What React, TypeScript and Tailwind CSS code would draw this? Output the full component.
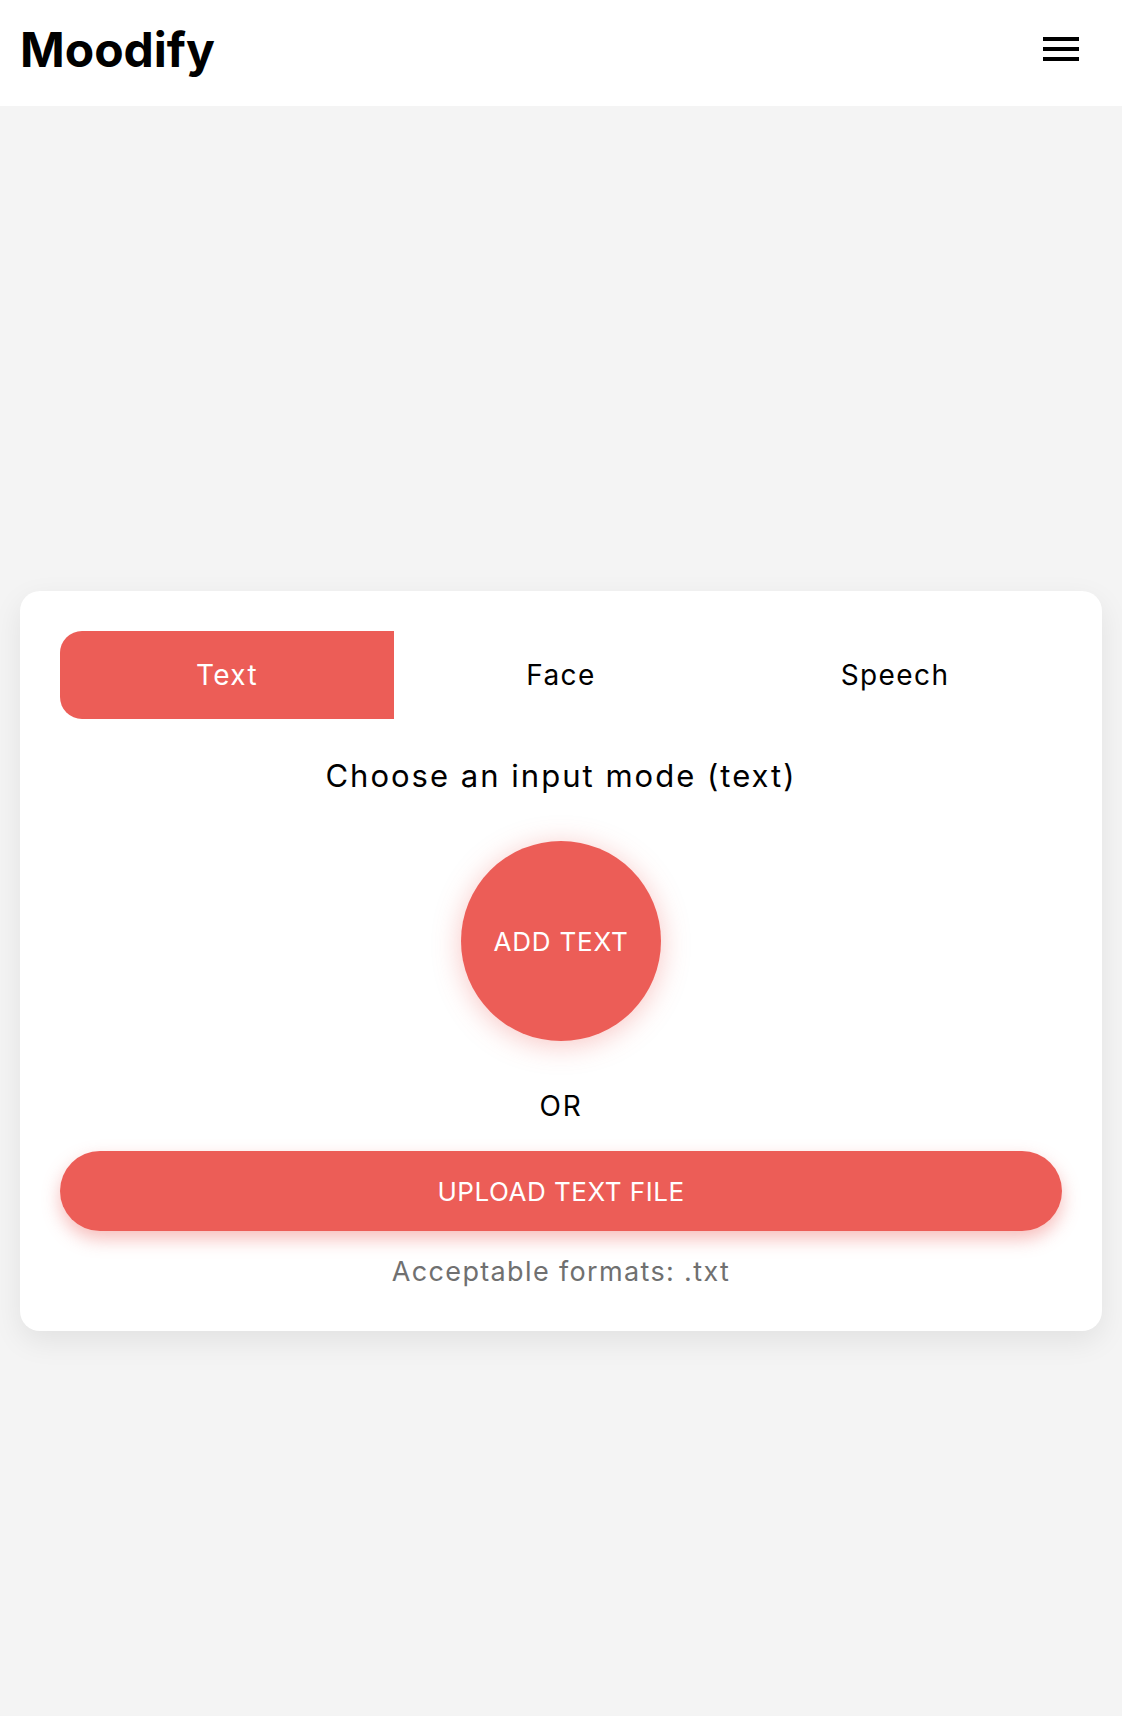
import { useState } from "react";

const tabs = ["Text", "Face", "Speech"];

function Header() {
  return (
    <header className="h-[106px] bg-white flex items-center justify-between pl-[20px] pr-[43px]">
      <h1 className="text-[48px] font-bold text-black leading-none pb-[6px]">Moodify</h1>
      <button className="flex flex-col gap-[6px] w-[36px] mb-[8px]" aria-label="menu">
        <span className="block h-[4px] w-full bg-black" />
        <span className="block h-[4px] w-full bg-black" />
        <span className="block h-[4px] w-full bg-black" />
      </button>
    </header>
  );
}

export default function App() {
  const [active, setActive] = useState("Text");

  return (
    <div className="min-h-[1716px] bg-[#f4f4f4] font-['Inter','Open_Sans',sans-serif]">
      <Header />
      <main className="px-[20px] pt-[485px] pb-[385px]">
        <section className="rounded-[20px] bg-white px-[40px] pt-[40px] pb-[39px] shadow-[0_10px_30px_rgba(0,0,0,0.08)] flex flex-col items-center">
          {/* tabs */}
          <div className="grid grid-cols-3 w-full h-[88px]">
            {tabs.map((t) => (
              <button
                key={t}
                onClick={() => setActive(t)}
                className={
                  t === active
                    ? "bg-[#ec5d57] text-white text-[28px] tracking-[0.05em] rounded-l-[22px]"
                    : "text-black text-[28px] tracking-[0.05em]"
                }
              >
                {t}
              </button>
            ))}
          </div>

          <p className="mt-[35px] text-[31px] leading-[44px] tracking-[0.065em] text-black">Choose an input mode (text)</p>

          <button className="mt-[43px] w-[200px] h-[200px] rounded-full bg-[#ec5d57] text-white text-[26px] tracking-[0.03em] shadow-[0_4px_28px_rgba(236,93,87,0.35)]">
            ADD TEXT
          </button>

          <p className="mt-[45px] text-[28px] leading-[40px] tracking-[0.06em] text-black">OR</p>

          <button className="mt-[25px] w-full h-[80px] rounded-full bg-[#ec5d57] text-white text-[26px] tracking-[0.02em] shadow-[0_8px_18px_rgba(236,93,87,0.4)]">
            UPLOAD TEXT FILE
          </button>

          <p className="mt-[21px] text-[27px] leading-[40px] tracking-[0.05em] text-[#707070]">Acceptable formats: .txt</p>
        </section>
      </main>
    </div>
  );
}
